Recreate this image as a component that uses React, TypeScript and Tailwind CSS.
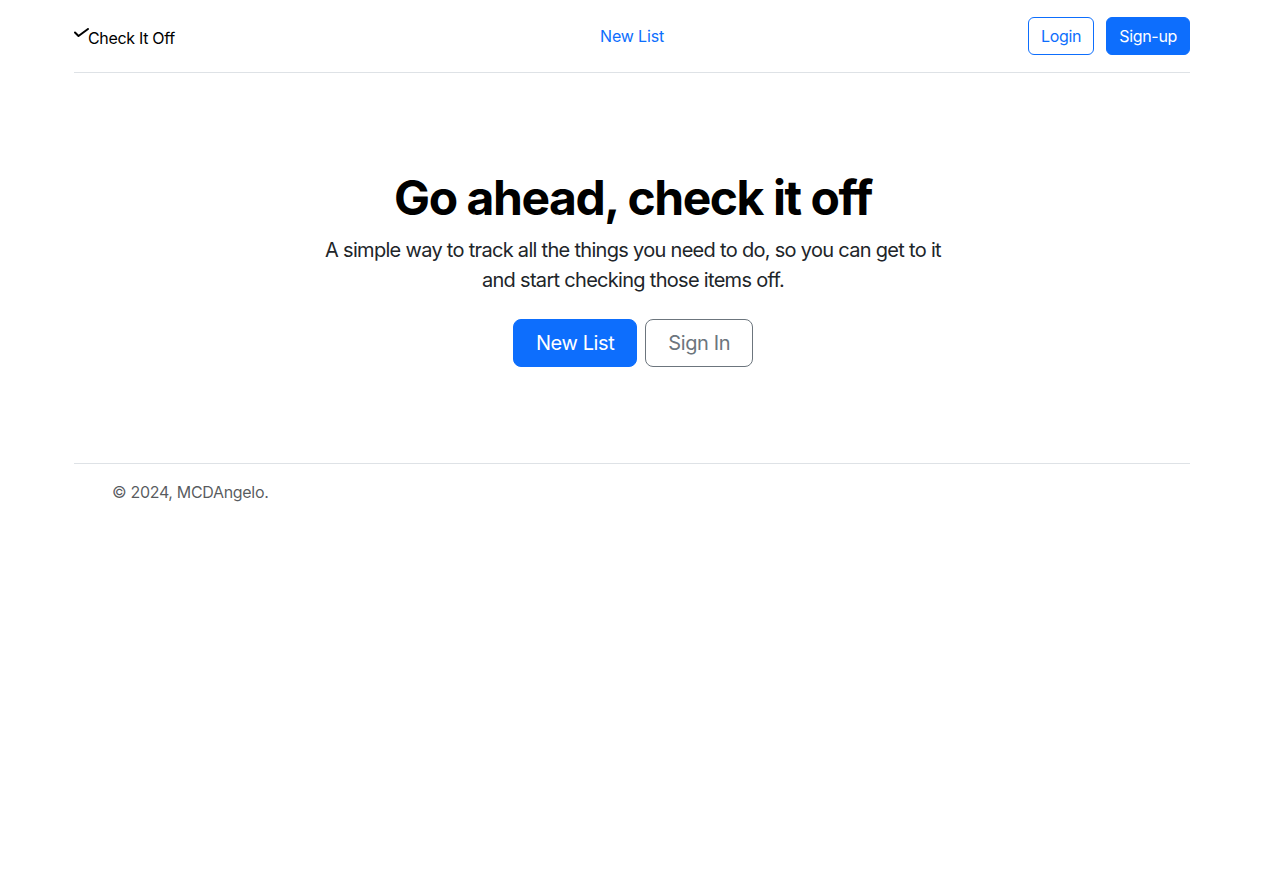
import React from "react";

const CheckIcon: React.FC = () => (
  <svg width="15" height="10" viewBox="0 0 15 10" fill="none" className="mt-[11px] shrink-0">
    <polyline points="1,4.5 4.5,8 14,1" stroke="currentColor" strokeWidth="2" strokeLinecap="round" strokeLinejoin="round" />
  </svg>
);

const App: React.FC = () => {
  return (
    <div className="min-h-screen bg-white text-[#212529] font-['Inter','Noto_Sans',sans-serif]">
      <div className="mx-auto w-[1140px] px-3">
        <header className="flex items-center border-b border-[#dee2e6] py-[17px] mb-6 -ml-[1px] mr-[1px]">
          <div className="flex flex-1 self-start">
            <a href="#" className="flex items-start text-black text-base leading-6 tracking-[-0.02em]">
              <CheckIcon />
              <span className="-ml-[1px] mt-[9px]">Check It Off</span>
            </a>
          </div>
          <nav>
            <a href="#" className="block px-4 py-[7px] text-base leading-6 text-[#0d6efd] tracking-[-0.01em]">
              New List
            </a>
          </nav>
          <div className="flex flex-1 justify-end gap-3">
            <button className="h-[38px] rounded-md border border-[#0d6efd] px-3 text-base text-[#0d6efd] tracking-[-0.02em]">
              Login
            </button>
            <button className="h-[38px] rounded-md border border-[#0d6efd] bg-[#0d6efd] px-3 text-base text-white tracking-[-0.02em]">
              Sign-up
            </button>
          </div>
        </header>
      </div>

      <section className="my-12 px-6 py-12 text-center">
        <h1 className="mb-2 text-[48px] font-bold leading-[1.2] tracking-[-0.03em] text-black">
          Go ahead, check it off
        </h1>
        <div className="mx-auto w-[640px]">
          <p className="mb-6 text-xl leading-[1.5] tracking-[-0.035em] text-[#212529]">
            A simple way to track all the things you need to do, so you can get to it and start checking those items off.
          </p>
          <div className="flex justify-center gap-2">
            <button className="h-12 rounded-lg border border-[#0d6efd] bg-[#0d6efd] px-[22px] text-xl tracking-[-0.02em] text-white">
              New List
            </button>
            <button className="h-12 rounded-lg border border-[#6c757d] px-[22px] text-xl tracking-[-0.02em] text-[#6c757d]">
              Sign In
            </button>
          </div>
        </div>
      </section>

      <div className="mx-auto w-[1140px] px-3">
        <footer className="my-6 border-t border-[#dee2e6] py-4 -ml-[1px] mr-[1px]">
          <span className="ml-[38px] text-base leading-6 tracking-[-0.02em] text-[#212529bf]">© 2024, MCDAngelo.</span>
        </footer>
      </div>
    </div>
  );
};

export default App;
